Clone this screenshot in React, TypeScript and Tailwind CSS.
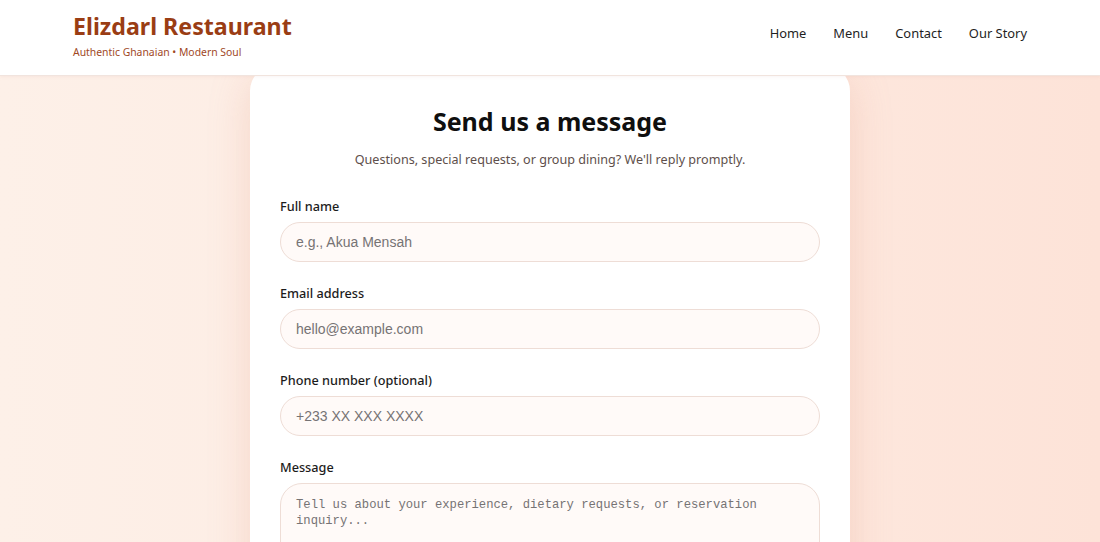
import React from 'react';

const navLinks = ['Home', 'Menu', 'Contact', 'Our Story'];

const Field: React.FC<{ label: string; placeholder: string; type?: string }> = ({ label, placeholder, type = 'text' }) => {
  return (
    <div className="flex flex-col">
      <label className="text-[12.7px] leading-[18px] font-medium text-[#1c1c1c] mb-[7px]">{label}</label>
      <input
        type={type}
        placeholder={placeholder}
        className="h-[40px] w-full rounded-full border border-[#eeddd6] bg-[#fffaf8] px-[15px] text-[14px] text-[#333] placeholder:text-[#767374] outline-none"
        style={{ fontFamily: '"Liberation Sans", Arial, sans-serif' }}
      />
    </div>
  );
};

const App: React.FC = () => {
  return (
    <div
      className="min-h-screen h-[542px] overflow-hidden bg-gradient-to-r from-[#fdf0e8] via-[#fdebe2] to-[#fde3d8]"
      style={{ fontFamily: '"Noto Sans", "Open Sans", sans-serif' }}
    >
      <header className="relative z-10 h-[76px] bg-white border-b border-[#f1e4de] shadow-[0_1px_3px_rgba(180,120,100,0.08)]">
        <div className="flex h-full items-start justify-between px-[73px]">
          <div className="pt-[9px]">
            <h1 className="text-[23.2px] leading-[34px] font-bold text-[#9a3d14]">Elizdarl Restaurant</h1>
            <p className="mt-[2px] text-[10.4px] leading-[14px] text-[#a0481f]">Authentic Ghanaian • Modern Soul</p>
          </div>
          <nav className="flex items-center gap-[27px] pt-[23px]">
            {navLinks.map((link) => (
              <a key={link} href="#" className="text-[12.9px] leading-[20px] text-[#1f1f1f]">
                {link}
              </a>
            ))}
          </nav>
        </div>
      </header>

      <main className="flex justify-center">
        <div className="-mt-[11px] w-[600px] rounded-[26px] bg-white px-[30px] pt-[39px] pb-10 shadow-[0_10px_40px_rgba(225,150,125,0.28)]">
          <h2 className="text-center text-[25px] leading-[34px] font-bold text-[#0f0f0f]">Send us a message</h2>
          <p className="mt-[13px] text-center text-[12.6px] leading-[18px] text-[#5e4f4b]">
            Questions, special requests, or group dining? We&apos;ll reply promptly.
          </p>

          <form className="mt-[28px] flex flex-col gap-[22px]">
            <Field label="Full name" placeholder="e.g., Akua Mensah" />
            <Field label="Email address" placeholder="hello@example.com" type="email" />
            <Field label="Phone number (optional)" placeholder="+233 XX XXX XXXX" type="tel" />
            <div className="flex flex-col">
              <label className="text-[12.7px] leading-[18px] font-medium text-[#1c1c1c] mb-[7px]">Message</label>
              <textarea
                rows={5}
                placeholder="Tell us about your experience, dietary requests, or reservation inquiry..."
                className="w-full resize-none rounded-[22px] border border-[#eeddd6] bg-[#fffaf8] px-[15px] pt-[13px] pb-[11px] text-[12.2px] leading-[16px] text-[#333] placeholder:text-[#767374] outline-none"
                style={{ fontFamily: '"Liberation Mono", "DejaVu Sans Mono", monospace' }}
              />
            </div>
          </form>
        </div>
      </main>
    </div>
  );
};

export default App;
